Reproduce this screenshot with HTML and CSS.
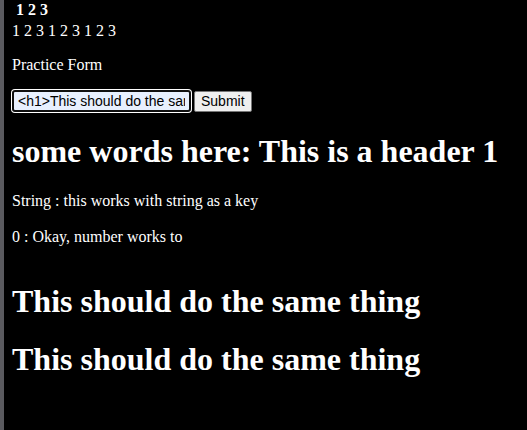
FILE: index.html
```html
<!DOCTYPE html>
<html>
<head>
<meta charset="utf-8">
<link rel="stylesheet" href="styles.css">
</head>
<body>
<div class="page">
  <div class="nums nums-bold">1 2 3</div>
  <div class="nums">1 2 3 1 2 3 1 2 3</div>
  <p class="title">Practice Form</p>
  <form class="form">
    <input class="field" type="text" value="<h1>This should do the same thing</h1>">
    <button class="submit" type="button">Submit</button>
  </form>
  <h1 class="head">some words here: This is a header 1</h1>
  <p class="line">String : this works with string as a key</p>
  <p class="line">0 : Okay, number works to</p>
  <h1 class="head first-same">This should do the same thing</h1>
  <h1 class="head">This should do the same thing</h1>
</div>
</body>
</html>
```
FILE: styles.css
```css
html, body {
  height: 100%;
}
body {
  margin: 0;
  background: #000;
  color: #fff;
  font-family: "Liberation Serif", "Times New Roman", serif;
  font-size: 16px;
  border-left: 4px solid #5a5a5f;
  box-sizing: border-box;
  overflow: hidden;
}
.page {
  padding-left: 8px;
}
.nums {
  line-height: 21px;
}
.nums-bold {
  font-weight: bold;
  padding-left: 4px;
  margin-top: -1px;
}
.title {
  margin: 15px 0 16px;
}
.form {
  display: flex;
  align-items: center;
  gap: 3px;
  margin: 0;
}
.field {
  box-sizing: border-box;
  width: 179px;
  height: 22px;
  margin: 0;
  padding: 1px 4px;
  border: 2px solid #101010;
  border-radius: 3px;
  box-shadow: 0 0 0 1px #fff;
  background: #e8f0fe;
  color: #000;
  font-family: Arial, "Liberation Sans", sans-serif;
  font-size: 14px;
  outline: none;
}
.submit {
  box-sizing: border-box;
  height: 21px;
  padding: 1px 6px;
  border: 1px solid #767676;
  border-radius: 2px;
  background: #efefef;
  color: #000;
  font-family: Arial, "Liberation Sans", sans-serif;
  font-size: 14px;
}
.head {
  font-size: 32px;
  font-weight: bold;
  margin: 21.44px 0;
}
.line {
  margin: 18px 0;
}
.first-same {
  margin-top: 37px;
}
```
